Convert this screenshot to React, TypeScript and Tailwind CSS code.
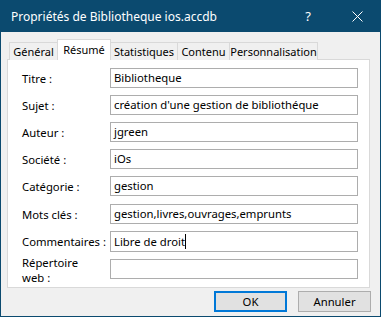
import React from "react";

const rows: { label: string; value: string; mt: string; h: string }[] = [
  { label: "Titre :", value: "Bibliotheque", mt: "mt-0", h: "h-[20px]" },
  { label: "Sujet :", value: "création d'une gestion de bibliothéque", mt: "mt-[7px]", h: "h-[20px]" },
  { label: "Auteur :", value: "jgreen", mt: "mt-[7px]", h: "h-[20px]" },
  { label: "Société :", value: "iOs", mt: "mt-[7px]", h: "h-[20px]" },
  { label: "Catégorie :", value: "gestion", mt: "mt-[7px]", h: "h-[20px]" },
  { label: "Mots clés :", value: "gestion,livres,ouvrages,emprunts", mt: "mt-[8px]", h: "h-[20px]" },
];

function Field({ label, value, mt, h, caret }: { label: string; value: string; mt: string; h: string; caret?: boolean }) {
  return (
    <div className={`flex items-center ${mt}`}>
      <div className="w-[88px] shrink-0 leading-[15px] whitespace-nowrap">{label}</div>
      <div className={`w-[248px] ${h} border border-[#adadad] bg-white flex items-center pl-[3px] leading-none whitespace-nowrap overflow-hidden`}>
        <span>{value}</span>
        {caret && <span className="inline-block w-px h-[15px] bg-black" />}
      </div>
    </div>
  );
}

export default function App() {
  const tabs = [
    { t: "Général", w: "w-[49px]" },
    { t: "Résumé", w: "w-[54px]" },
    { t: "Statistiques", w: "w-[68px]" },
    { t: "Contenu", w: "w-[53px]" },
    { t: "Personnalisation", w: "w-[89px]" },
  ];
  return (
    <div className="w-[381px] h-[317px] border border-[#0b4a6f] bg-[#f0f0f0] flex flex-col font-['Noto_Sans',sans-serif] text-[11.3px] text-black overflow-hidden">
      <div className="h-[31px] shrink-0 bg-[#0b4a6f] flex items-center text-white">
        <span className="flex-1 pl-[10px] text-[12px]">Propriétés de Bibliotheque ios.accdb</span>
        <span className="w-[20px] text-center text-[13px] mr-[33px]">?</span>
        <span className="w-[12px] flex justify-center mr-[17px]">
          <svg width="11" height="11" viewBox="0 0 11 11">
            <path d="M0.5 0.5 L10.5 10.5 M10.5 0.5 L0.5 10.5" stroke="white" strokeWidth="1" fill="none" />
          </svg>
        </span>
      </div>
      <div className="ml-[6px] mt-[7px] flex items-end h-[21px] relative z-10 pl-[2px] text-[11px]">
        {tabs.map((tab, i) =>
          i === 1 ? (
            <div
              key={tab.t}
              className={`${tab.w} -ml-px h-[21px] bg-white border border-b-0 border-[#d9d9d9] flex items-start justify-center pt-[2px] leading-[15px] relative z-10 whitespace-nowrap`}
            >
              {tab.t}
            </div>
          ) : (
            <div
              key={tab.t}
              className={`${tab.w} ${i === 0 ? "" : "-ml-px"} h-[18px] bg-[#f0f0f0] border border-b-0 border-[#d9d9d9] flex items-center justify-center leading-[15px] whitespace-nowrap`}
            >
              {tab.t}
            </div>
          )
        )}
      </div>
      <div className="ml-[6px] -mt-px w-[363px] h-[229px] bg-white border border-[#d9d9d9] pt-[8px] pl-[14px] shrink-0">
        {rows.map((r) => (
          <Field key={r.label} {...r} />
        ))}
        <Field label="Commentaires :" value="Libre de droit" mt="mt-[7px]" h="h-[21px]" caret />
        <div className="flex items-start mt-[7px]">
          <div className="w-[88px] shrink-0 leading-[15px] -mt-[4px]">
            <div>Répertoire</div>
            <div>web :</div>
          </div>
          <div className="w-[248px] h-[20px] border border-[#adadad] bg-white" />
        </div>
      </div>
      <div className="flex justify-end gap-[11px] pr-[9px] mt-[3px]">
        <button className="w-[73px] h-[21px] bg-[#e1e1e1] border-2 border-[#0078d7] flex items-center justify-center leading-none">
          OK
        </button>
        <button className="w-[73px] h-[21px] bg-[#e1e1e1] border border-[#adadad] flex items-center justify-center leading-none">
          Annuler
        </button>
      </div>
    </div>
  );
}
